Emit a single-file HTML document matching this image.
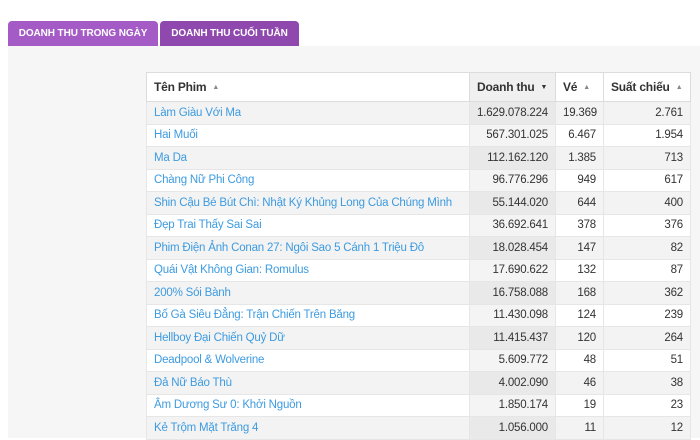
<!DOCTYPE html>
<html><head><meta charset="utf-8"><style>
*{margin:0;padding:0;box-sizing:border-box}
body{width:700px;height:438px;overflow:hidden;background:#fff;font-family:"Liberation Sans","DejaVu Sans",sans-serif}
.tab{position:absolute;top:21px;height:25px;color:#fff;font-size:10px;font-weight:bold;line-height:25px;text-align:center;border-radius:4px 4px 0 0;letter-spacing:-.1px;white-space:nowrap}
.panel{position:absolute;left:8px;top:46px;width:692px;height:392px;background:#f6f6f6}
table{position:absolute;left:146px;top:72px;width:544px;border-collapse:collapse;font-size:11.5px;color:#333;table-layout:fixed;letter-spacing:-.2px}
th{height:29px;text-align:left;font-weight:bold;padding:0 7px;border:1px solid #dcdcdc;background:#fff;font-size:12px;color:#333;white-space:nowrap;overflow:hidden}
th.s{background:#f0f0f0}
td{height:22.5px;padding:0 7px;border:1px solid #e6e6e6;white-space:nowrap;overflow:hidden}
td.n{color:#3d9be0}
td.r{text-align:right}
tr.o td{background:#f3f3f3}
tr.o td.s{background:#e9e9e9}
tr.e td{background:#fff}
tr.e td.s{background:#f4f4f4}
.ar{font-size:7px;color:#888;margin-left:6px;vertical-align:middle}
</style></head><body>
<div class="tab" style="left:8px;width:150px;background:#a45bc6">DOANH THU TRONG NGÀY</div>
<div class="tab" style="left:160px;width:139px;background:#8e48ae">DOANH THU CUỐI TUẦN</div>
<div class="panel"></div>
<table>
<colgroup><col style="width:323px"><col style="width:86px"><col style="width:48px"><col style="width:87px"></colgroup>
<tr><th>Tên Phim<span class="ar">▲</span></th><th class="s">Doanh thu<span class="ar" style="color:#333">▼</span></th><th>Vé<span class="ar">▲</span></th><th>Suất chiếu<span class="ar">▲</span></th></tr>
<tr class="o"><td class="n">Làm Giàu Với Ma</td><td class="r s">1.629.078.224</td><td class="r">19.369</td><td class="r">2.761</td></tr>
<tr class="e"><td class="n">Hai Muối</td><td class="r s">567.301.025</td><td class="r">6.467</td><td class="r">1.954</td></tr>
<tr class="o"><td class="n">Ma Da</td><td class="r s">112.162.120</td><td class="r">1.385</td><td class="r">713</td></tr>
<tr class="e"><td class="n">Chàng Nữ Phi Công</td><td class="r s">96.776.296</td><td class="r">949</td><td class="r">617</td></tr>
<tr class="o"><td class="n">Shin Cậu Bé Bút Chì: Nhật Ký Khủng Long Của Chúng Mình</td><td class="r s">55.144.020</td><td class="r">644</td><td class="r">400</td></tr>
<tr class="e"><td class="n">Đẹp Trai Thấy Sai Sai</td><td class="r s">36.692.641</td><td class="r">378</td><td class="r">376</td></tr>
<tr class="o"><td class="n">Phim Điện Ảnh Conan 27: Ngôi Sao 5 Cánh 1 Triệu Đô</td><td class="r s">18.028.454</td><td class="r">147</td><td class="r">82</td></tr>
<tr class="e"><td class="n">Quái Vật Không Gian: Romulus</td><td class="r s">17.690.622</td><td class="r">132</td><td class="r">87</td></tr>
<tr class="o"><td class="n">200% Sói Bành</td><td class="r s">16.758.088</td><td class="r">168</td><td class="r">362</td></tr>
<tr class="e"><td class="n">Bố Gà Siêu Đẳng: Trận Chiến Trên Băng</td><td class="r s">11.430.098</td><td class="r">124</td><td class="r">239</td></tr>
<tr class="o"><td class="n">Hellboy Đại Chiến Quỷ Dữ</td><td class="r s">11.415.437</td><td class="r">120</td><td class="r">264</td></tr>
<tr class="e"><td class="n">Deadpool &amp; Wolverine</td><td class="r s">5.609.772</td><td class="r">48</td><td class="r">51</td></tr>
<tr class="o"><td class="n">Đả Nữ Báo Thù</td><td class="r s">4.002.090</td><td class="r">46</td><td class="r">38</td></tr>
<tr class="e"><td class="n">Âm Dương Sư 0: Khởi Nguồn</td><td class="r s">1.850.174</td><td class="r">19</td><td class="r">23</td></tr>
<tr class="o"><td class="n">Kẻ Trộm Mặt Trăng 4</td><td class="r s">1.056.000</td><td class="r">11</td><td class="r">12</td></tr>
</table>
</body></html>
